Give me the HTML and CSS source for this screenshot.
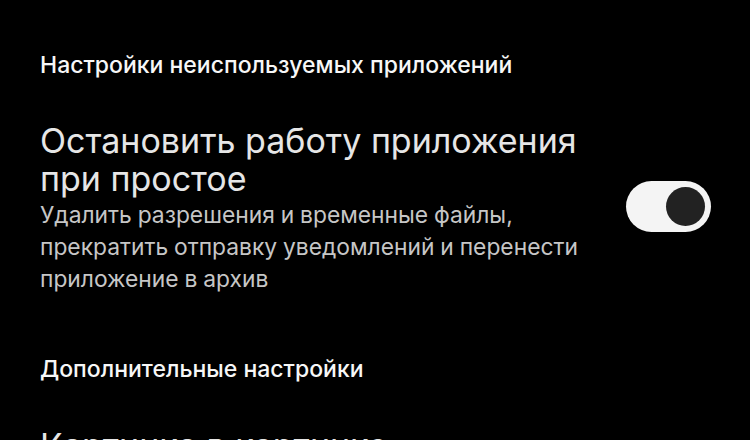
FILE: index.html
```html
<!DOCTYPE html>
<html lang="ru">
<head>
<meta charset="utf-8">
<link rel="stylesheet" href="styles.css">
</head>
<body>
<div class="screen">
  <div class="section-header">Настройки неиспользуемых приложений</div>
  <div class="row">
    <div class="row-text">
      <div class="row-title">Остановить работу приложения<br>при простое</div>
      <div class="row-summary">Удалить разрешения и временные файлы,<br>прекратить отправку уведомлений и перенести<br>приложение в архив</div>
    </div>
    <div class="switch"><div class="knob"></div></div>
  </div>
  <div class="section-header second">Дополнительные настройки</div>
  <div class="row last">
    <div class="row-text">
      <div class="row-title">Картинка в картинке</div>
    </div>
  </div>
</div>
</body>
</html>
```
FILE: styles.css
```css
html, body {
  margin: 0;
  padding: 0;
  background: #000;
}
.screen {
  width: 750px;
  height: 440px;
  overflow: hidden;
  padding: 51px 39px 0 40px;
  box-sizing: border-box;
  font-family: Inter, "Noto Sans", sans-serif;
}
.section-header {
  color: #f7f7f7;
  font-size: 23px;
  font-weight: 500;
  line-height: 28px;
}
.section-header.second {
  margin-top: 60px;
}
.row {
  display: flex;
  align-items: center;
  margin-top: 43px;
}
.row.last {
  margin-top: 44px;
}
.row-text {
  flex: 1;
  min-width: 0;
  padding-right: 20px;
  white-space: nowrap;
}
.row-title {
  color: #e6e6e6;
  font-size: 34px;
  line-height: 38px;
  font-weight: 400;
}
.row-summary {
  color: #c6c6c6;
  font-size: 22.8px;
  line-height: 32px;
  margin-top: 1px;
  word-spacing: -0.5px;
}
.switch {
  width: 85px;
  height: 51px;
  border-radius: 26px;
  background: #f4f4f4;
  display: flex;
  align-items: center;
  justify-content: flex-end;
  padding: 0 6px;
  box-sizing: border-box;
  flex: none;
  margin-bottom: 5px;
}
.knob {
  width: 39px;
  height: 39px;
  border-radius: 50%;
  background: #222;
}
```
